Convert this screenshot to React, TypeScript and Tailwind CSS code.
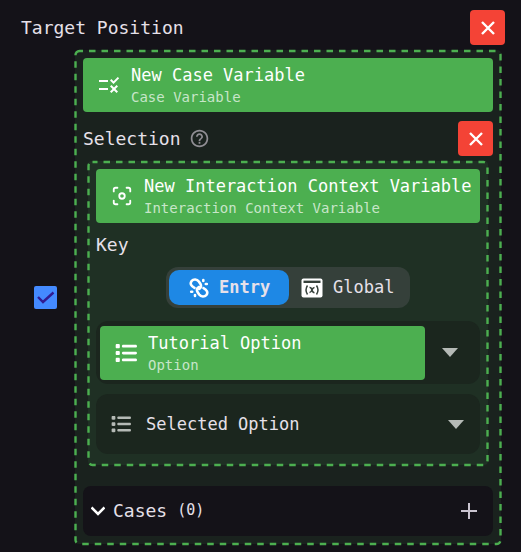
import React from "react";
import { MdRule, MdHelpOutline } from "react-icons/md";
import { FaList } from "react-icons/fa6";
import { Focus } from "lucide-react";

function Dashes({ offset }: { offset: number }) {
  return (
    <svg className="pointer-events-none absolute inset-0 h-full w-full overflow-visible" aria-hidden="true">
      <rect
        className="h-[calc(100%-1px)] w-[calc(100%-1px)]"
        x="0.5"
        y="1"
        rx="4"
        fill="none"
        stroke="#4caf50"
        strokeWidth="2.4"
        strokeDasharray="6.5 6"
        strokeDashoffset={offset}
      />
    </svg>
  );
}

function Card({ icon, title, subtitle }: { icon: React.ReactNode; title: React.ReactNode; subtitle: string }) {
  return (
    <div className="flex h-[54px] items-center rounded bg-[#4caf50] pl-3.5 text-white">
      <span className="flex w-6 shrink-0 justify-center">{icon}</span>
      <div className="ml-2.5 min-w-0 flex-1">
        <div className="text-[17px] font-medium leading-6 whitespace-nowrap">{title}</div>
        <div className="text-sm leading-5 whitespace-nowrap text-white/70">{subtitle}</div>
      </div>
    </div>
  );
}

function CloseButton({ label }: { label: string }) {
  return (
    <button aria-label={label} className="flex size-[35px] items-center justify-center rounded bg-[#f44336]">
      <svg viewBox="0 0 14 14" className="size-3.5" stroke="white" strokeWidth="2.4" aria-hidden="true">
        <path d="M1 1L13 13M13 1L1 13" />
      </svg>
    </button>
  );
}

function Arrow() {
  return (
    <svg viewBox="0 0 16 9" className="pointer-events-none h-[9px] w-4 shrink-0 fill-[#b5bab6]" aria-hidden="true">
      <path d="M0 0H16L8 9Z" />
    </svg>
  );
}

function LinkIcon() {
  return (
    <svg viewBox="0 0 20 20" className="size-5" fill="none" stroke="white" strokeWidth="2.6" strokeLinecap="round" aria-hidden="true">
      <path d="M5.5 9.800C2 8 0.800 5.500 2.500 3.200C4.500 0.800 8 1 9.800 3.500L11.500 6C12.500 8 12 10 10 11" />
      <path d="M14.500 10.200C18 12 19.200 14.500 17.500 16.800C15.500 19.200 12 19 10.200 16.500L8.500 14C7.500 12 8 10 10 9" />
      <path d="M14.300 2V3M17.800 6H16.800M2.200 13.800H3.200M6 18V17" />
    </svg>
  );
}

function VariableIcon() {
  return (
    <svg viewBox="0 0 22 20" className="h-5 w-[22px]" aria-hidden="true">
      <rect width="21" height="19" x="0.500" y="0.500" rx="2" fill="white" />
      <g fill="none" stroke="#35403a" strokeWidth="1.500">
        <path d="M2.500 3.800H19.500" strokeWidth="2.400" />
        <path d="M6.500 7.500Q3.500 12 6.500 16.500M15.500 7.500Q18.500 12 15.500 16.500M8.500 9.500Q10 9 11 12T13.500 14.500M13.500 9.500Q12 9.500 11 12T8.500 14.500" />
      </g>
    </svg>
  );
}

export default function App() {
  return (
    <main className="min-h-screen bg-[#141218] font-['DejaVu_Sans_Mono',monospace] text-lg text-[#e6e0e9]">
      <header className="flex items-start justify-between pt-2.5 pr-4 pb-1 pl-[21px]">
        <h1 className="leading-9">Target Position</h1>
        <CloseButton label="Remove target position" />
      </header>

      <div className="flex items-center pr-5 pb-2 pl-[34px]">
        <label className="relative mr-[18px] flex shrink-0">
          <input type="checkbox" defaultChecked aria-label="Enable target position" className="size-[23px] appearance-none rounded-xs bg-[#448aff]" />
          <svg viewBox="0 0 23 23" className="pointer-events-none absolute inset-0 size-[23px]" fill="none" stroke="#311b92" strokeWidth="2.400" aria-hidden="true">
            <path d="M4 11L9 16L19.500 6.500" />
          </svg>
        </label>

        <section className="relative min-w-0 flex-1 rounded bg-[#1a221e] p-2">
          <Dashes offset={3} />
          <Card icon={<MdRule size={24} />} title="New Case Variable" subtitle="Case Variable" />
          <div className="mt-[9px] flex items-center">
            <h2>Selection</h2>
            <button aria-label="Help" className="ml-2 text-[#8f8d93]">
              <MdHelpOutline size={21} />
            </button>
            <div className="ml-auto">
              <CloseButton label="Remove selection" />
            </div>
          </div>

          <section className="relative mx-[5px] mt-[5px] rounded bg-[#1f3024] px-2 pt-2 pb-[11px]">
            <Dashes offset={1.5} />
            <Card icon={<Focus size={22} />} title="New Interaction Context Variable" subtitle="Interaction Context Variable" />
            <h3 className="leading-[44px]">Key</h3>
            <fieldset aria-label="Key source" className="mx-auto flex w-fit rounded-xl bg-[#35403a] p-[3px] text-[17px]">
              <label className="flex h-[35px] w-[120px] items-center gap-2.5 rounded-[10px] bg-[#1e88e5] pl-5 font-bold">
                <input type="radio" name="source" defaultChecked className="sr-only" />
                <LinkIcon />
                Entry
              </label>
              <label className="flex h-[35px] w-[118px] items-center gap-2.5 pl-3">
                <input type="radio" name="source" className="sr-only" />
                <VariableIcon />
                Global
              </label>
            </fieldset>

            <div className="mt-[13px] flex h-[63px] items-center rounded-xl bg-[#1b261e] pr-[22px] pl-1">
              <div className="mr-[17px] min-w-0 flex-1">
                <Card
                  icon={<FaList size={22} />}
                  title={
                    <select aria-label="Option" className="block w-full appearance-none bg-transparent outline-none">
                      <option>Tutorial Option</option>
                    </select>
                  }
                  subtitle="Option"
                />
              </div>
              <Arrow />
            </div>

            <div className="mt-2.5 flex h-[60px] items-center rounded-xl bg-[#1b261e] pr-4 pl-[15px]">
              <FaList size={20} className="shrink-0 text-[#b5bab6]" />
              <select aria-label="Selected option" className="ml-[15px] min-w-0 flex-1 appearance-none bg-transparent text-[17px] outline-none">
                <option>Selected Option</option>
              </select>
              <Arrow />
            </div>
          </section>

          <div className="mt-[21px] flex h-[50px] items-center rounded-lg bg-[#141218] pr-4 pl-2">
            <button aria-expanded="false" className="flex items-center">
              <svg viewBox="0 0 14 10" className="h-2.5 w-3.5" fill="none" stroke="white" strokeWidth="2.600" aria-hidden="true">
                <path d="M0.500 1.500L7 8L13.500 1.500" />
              </svg>
              <span className="ml-2">Cases</span>
              <span className="ml-2.5 text-[15px]">(0)</span>
            </button>
            <button aria-label="Add case" className="ml-auto">
              <svg viewBox="0 0 16 16" className="size-4" stroke="#cac4d0" strokeWidth="2" aria-hidden="true">
                <path d="M8 0V16M0 8H16" />
              </svg>
            </button>
          </div>
        </section>
      </div>
    </main>
  );
}
